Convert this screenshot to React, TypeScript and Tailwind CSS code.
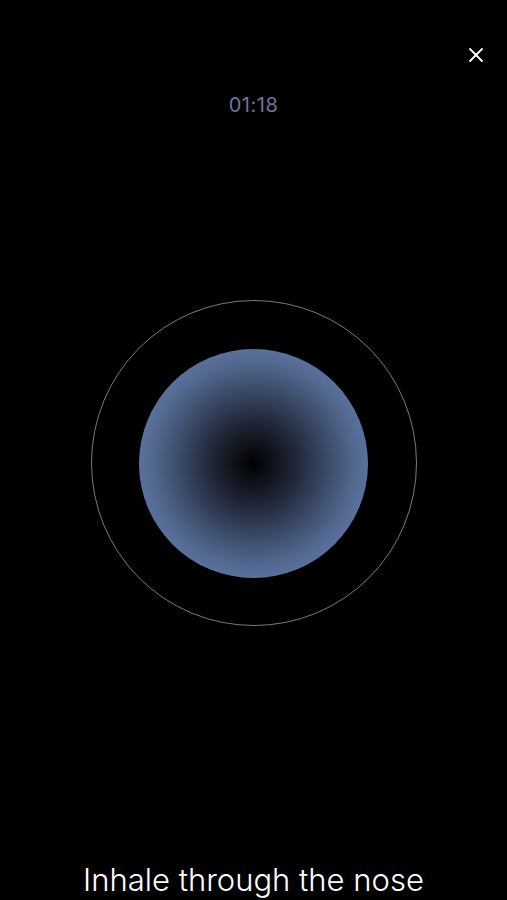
import { X } from 'lucide-react';

export default function App() {
  return (
    <div
      className="h-[900px] w-full bg-black flex flex-col items-center overflow-hidden"
      style={{ fontFamily: 'Inter, "Noto Sans", sans-serif' }}
    >
      <div className="w-full flex justify-end pt-[43px] pr-[19px]">
        <button className="text-white">
          <X className="w-6 h-6" strokeWidth={1.8} />
        </button>
      </div>

      <div className="mt-[26px] text-[20px] leading-6 text-[#6b7698] tracking-wide">01:18</div>

      <div className="mt-[183px] w-[326px] h-[326px] rounded-full border border-[#7a7a7a] flex items-center justify-center">
        <div className="w-[229px] h-[229px] rounded-full bg-[radial-gradient(circle,#000000_0%,#1e2535_25%,#52678f_62%,#6a84b9_88%,#6e88bd_100%)]" />
      </div>

      <div className="mt-auto text-[31px] leading-[40px] font-light text-white">
        Inhale through the nose
      </div>
    </div>
  );
}
